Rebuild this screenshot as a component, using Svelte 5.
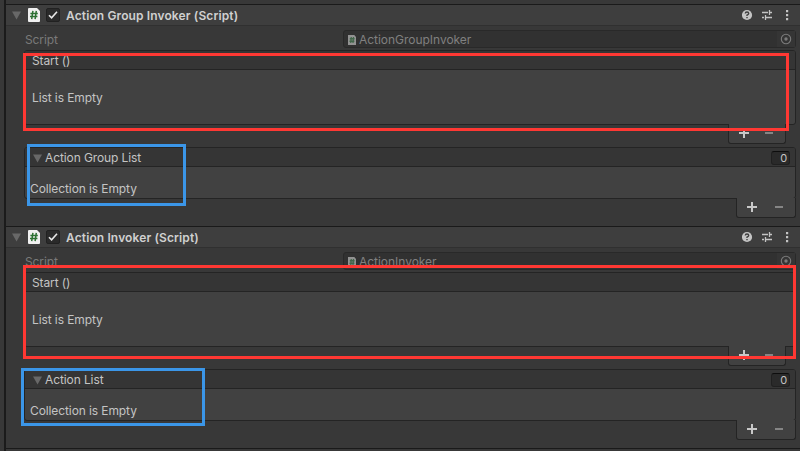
<script>
  const sections = [
    { title: 'Action Group Invoker (Script)', script: 'ActionGroupInvoker', list: 'Action Group List' },
    { title: 'Action Invoker (Script)', script: 'ActionInvoker', list: 'Action List' }
  ];
  const marks = [
    { kind: 'red', x: 23, y: 53, w: 766, h: 78 },
    { kind: 'blue', x: 27, y: 144, w: 159, h: 62 },
    { kind: 'red', x: 23, y: 265, w: 773, h: 94 },
    { kind: 'blue', x: 21, y: 368, w: 184, h: 58 }
  ];
</script>

{#snippet fold()}
  <svg class="fold" width="9" height="9" viewBox="0 0 9 9"><path d="M0 0.4H9L4.5 8.4Z" fill="#686868" /></svg>
{/snippet}

{#snippet footer(kind)}
  <div class="footer {kind}">
    <svg width="10" height="10" viewBox="0 0 10 10"><path d="M0 5H10M5 0V10" stroke="#c8c8c8" stroke-width="2" /></svg>
    <svg width="8" height="10" viewBox="0 0 8 10"><path d="M0 5H8" stroke="#858585" stroke-width="2" /></svg>
  </div>
{/snippet}

<div class="window">
  <div class="inspector">
    {#each sections as s}
      <section>
        <header>
          {@render fold()}
          <svg class="file" width="12" height="14" viewBox="0 0 12 14">
            <path d="M1 0H9L12 3V13Q12 14 11 14H1Q0 14 0 13V1Q0 0 1 0Z" fill="#f0f0f0" />
            <path d="M4.9 2.8L3.7 11.2M8.3 2.8L7.1 11.2M2.4 5.4H9.8M2 8.6H9.4" stroke="#2c7132" stroke-width="1.5" />
          </svg>
          <span class="check">
            <svg width="12" height="12" viewBox="0 0 12 12"><path d="M2 6.2L4.6 8.8L10 2.8" fill="none" stroke="#e6e6e6" stroke-width="1.6" /></svg>
          </span>
          <h2>{s.title}</h2>
          <svg class="tools" width="50" height="12" viewBox="0 0 50 12">
            <circle cx="5" cy="6" r="5.1" fill="#c4c4c4" />
            <path d="M3.3 4.6Q3.3 3 5 3T6.7 4.5Q6.7 5.4 5 6.1V7M5 8V9.3" fill="none" stroke="#3e3e3e" stroke-width="1.4" />
            <path d="M20 3.5H26M28 3.5H30M27.5 1V6M20 8.5H22M24 8.5H30M23.5 6V11" stroke="#c4c4c4" stroke-width="1.3" />
            <path d="M44 1H46.2V3.2H44ZM44 5H46.2V7.2H44ZM44 9H46.2V11.2H44Z" fill="#c4c4c4" />
          </svg>
        </header>
        <div class="row">
          <span class="label">Script</span>
          <div class="field">
            <svg class="mini" width="8" height="10" viewBox="0 0 9 10" preserveAspectRatio="none">
              <path d="M0 0H7L9 2V10H0Z" fill="#929292" />
              <path d="M3.7 2L3.1 8M6.2 2L5.6 8M2 3.8H7.4M1.7 6.3H7.1" stroke="#41664a" stroke-width="1.4" />
            </svg>
            <span class="object">{s.script}</span>
            <span class="picker">
              <svg width="12" height="12" viewBox="0 0 12 12"><circle cx="6" cy="6" r="4.7" fill="none" stroke="#7b7b7b" stroke-width="1.1" /><circle cx="6" cy="6" r="1.7" fill="#7b7b7b" /></svg>
            </span>
          </div>
        </div>
        <div class="event">
          <div class="bar"><span>Start ()</span></div>
          <div class="body"><span>List is Empty</span></div>
        </div>
        {@render footer('inset')}
        <div class="collection">
          <div class="bar">
            {@render fold()}
            <span>{s.list}</span>
            <span class="count">0</span>
          </div>
          <div class="body"><span>Collection is Empty</span></div>
        </div>
        {@render footer('flush')}
      </section>
    {/each}
    <div class="end"></div>
  </div>
  {#each marks as m}
    <div class="mark {m.kind}" style="left:{m.x}px;top:{m.y}px;width:{m.w}px;height:{m.h}px"></div>
  {/each}
</div>

<style>
  .window {
    position: relative;
    box-sizing: border-box;
    width: 800px;
    height: 451px;
    padding-left: 4px;
    overflow: hidden;
    background: #383838;
    color: #c4c4c4;
    font: 12px/16px Inter, 'Liberation Sans', sans-serif;
    letter-spacing: -0.1px;
    white-space: nowrap;
  }
  .window * { box-sizing: border-box; }
  svg { display: block; flex: none; }
  .inspector { height: 451px; padding-top: 4px; border-left: 2px solid #1b1b1b; }
  section { height: 222px; border-top: 1px solid #1a1a1a; }
  header {
    display: flex;
    align-items: center;
    height: 21px;
    padding: 0 8px 0 6px;
    background: #3e3e3e;
    border-bottom: 1px solid #303030;
  }
  header .fold { margin-top: 1px; }
  .file { margin-left: 7px; }
  .check {
    display: grid;
    place-items: center;
    width: 14px;
    height: 14px;
    margin-left: 6px;
    background: #2a2a2a;
    border: 1px solid #212121;
    border-radius: 2px;
  }
  h2 { margin: 0 0 0 6px; padding-top: 2px; font-size: 12px; font-weight: 600; letter-spacing: 0.12px; color: #d0d0d0; }
  .tools { margin-left: auto; }
  .row { display: flex; height: 24px; padding: 4px 4px 0 19px; }
  .label { width: 318px; padding-top: 2px; color: #7a7a7a; }
  .field {
    display: flex;
    align-items: center;
    flex: 1;
    height: 18px;
    padding-left: 4px;
    background: #313131;
    border: 1px solid #292929;
    border-radius: 3px;
    color: #808080;
  }
  .mini { margin-top: 2px; }
  .object { margin-left: 3px; padding-top: 2px; letter-spacing: -0.03px; }
  .picker { display: grid; place-items: center; width: 18px; height: 16px; margin-left: auto; background: #353535; }
  .event, .collection {
    margin: 0 4px 0 18px;
    background: #414141;
    border: 1px solid #242424;
    border-radius: 3px;
  }
  .event { height: 75px; }
  .bar { display: flex; align-items: center; height: 19px; background: #353535; border-bottom: 1px solid #242424; border-radius: 2px 2px 0 0; }
  .event .bar { padding: 2px 0 0 7px; }
  .event .body { padding: 20px 0 0 7px; }
  .collection { height: 52px; margin-top: 3px; }
  .collection .bar { padding: 2px 5px 0 8px; }
  .collection .bar .fold { margin-right: 3px; }
  .collection .body { padding: 14px 0 0 5px; }
  .count {
    width: 19px;
    height: 14px;
    margin: -1px 0 0 auto;
    padding-right: 2px;
    text-align: right;
    font-size: 11px;
    line-height: 13px;
    background: #2a2a2a;
    border: 1px solid #202020;
    border-top-color: #0d0d0d;
    border-radius: 3px;
  }
  .footer {
    display: flex;
    align-items: center;
    justify-content: space-between;
    position: relative;
    height: 20px;
    margin: -1px 4px 0 auto;
    padding: 0 12px 1px 10px;
    background: #414141;
    border: 1px solid #242424;
    border-top: 0;
    border-radius: 0 0 3px 3px;
  }
  .inset { width: 58px; margin-right: 14px; }
  .flush { width: 60px; }
  .end { height: 1px; background: #1a1a1a; }
  .mark { position: absolute; border: 3px solid; }
  .red { border-color: #ff3833; }
  .blue { border-color: #3b96e8; }
</style>
